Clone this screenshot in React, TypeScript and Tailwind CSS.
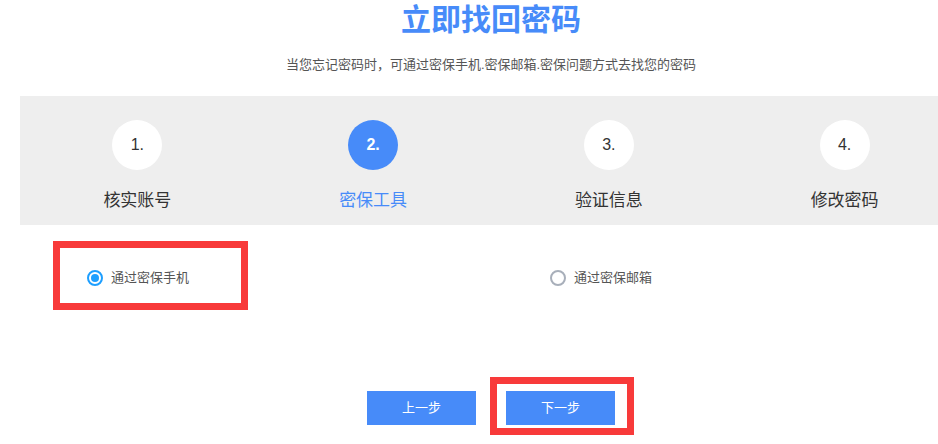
const steps = [
  { num: "1.", label: "核实账号" },
  { num: "2.", label: "密保工具" },
  { num: "3.", label: "验证信息" },
  { num: "4.", label: "修改密码" },
];

const active = 1;

function Radio({ checked, label }: { checked?: boolean; label: string }) {
  return (
    <label className="flex items-center gap-[8px] text-[13px] leading-[20px] text-[#555]">
      {checked ? (
        <span className="flex h-[16px] w-[16px] items-center justify-center rounded-full border-2 border-[#1e9fff] bg-white">
          <span className="h-[8px] w-[8px] rounded-full bg-[#1e9fff]" />
        </span>
      ) : (
        <span className="h-[16px] w-[16px] rounded-full border-2 border-[#a8afba] bg-white" />
      )}
      {label}
    </label>
  );
}

export default function App() {
  return (
    <div
      className="h-[444px] w-[938px] overflow-hidden bg-white"
      style={{ fontFamily: '"Liberation Sans", "Noto Sans CJK SC", sans-serif' }}
    >
      <div className="ml-[19px] w-[944px]">
        <h1 className="h-[40px] text-center text-[30px] font-bold leading-[40px] text-[#478bf9]">
          立即找回密码
        </h1>
        <p className="mt-[15px] text-center text-[13px] leading-[20px] text-[#555]">
          当您忘记密码时，可通过密保手机.密保邮箱.密保问题方式去找您的密码
        </p>

        <div className="mt-[21px] ml-[1px] grid h-[129px] grid-cols-4 bg-[#eeeeee] pt-[24px]">
          {steps.map((s, i) => (
            <div key={s.num} className="-ml-[1px] flex flex-col items-center">
              <div
                className={
                  i === active
                    ? "flex h-[50px] w-[50px] items-center justify-center rounded-full bg-[#478bf9] text-[16px] font-bold text-white"
                    : "flex h-[50px] w-[50px] items-center justify-center rounded-full bg-white text-[16px] text-[#333]"
                }
              >
                {s.num}
              </div>
              <div
                className={
                  i === active
                    ? "mt-[19px] text-[17px] leading-[24px] text-[#478bf9]"
                    : "mt-[19px] text-[17px] leading-[24px] text-[#333]"
                }
              >
                {s.label}
              </div>
            </div>
          ))}
        </div>

        <div className="mt-[16px] flex items-start">
          <div className="ml-[34px] flex h-[69px] w-[195px] items-center border-[7px] border-[#f83a3a] pl-[27px] pt-[5px]">
            <Radio checked label="通过密保手机" />
          </div>
          <div className="ml-[302px] mt-[27px]">
            <Radio label="通过密保邮箱" />
          </div>
        </div>

        <div className="mt-[67px] flex items-start">
          <button className="ml-[348px] mt-[14px] h-[34px] w-[109px] bg-[#478bf9] text-[13px] text-white">
            上一步
          </button>
          <div className="ml-[14px] h-[58px] w-[144px] border-[7px] border-[#f83a3a] pl-[9px] pt-[7px]">
            <button className="h-[34px] w-[109px] bg-[#478bf9] text-[13px] text-white">下一步</button>
          </div>
        </div>
      </div>
    </div>
  );
}
